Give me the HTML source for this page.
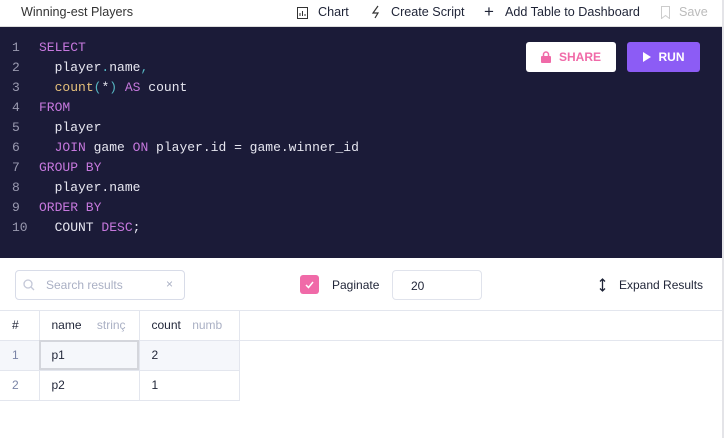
<!DOCTYPE html>
<html><head><style>
*{margin:0;padding:0;box-sizing:border-box}
body{width:724px;height:438px;background:#fff;font-family:"Liberation Sans",sans-serif;position:relative;overflow:hidden;color:#1f2437}
.top{position:absolute;left:0;top:0;width:722px;height:27px;border-bottom:1px solid #ddd;font-size:12.6px}
.top span{position:absolute;top:5px}
.ed{position:absolute;left:0;top:27px;width:722px;height:231px;background:#1b1b38;font-family:"Liberation Mono",monospace;font-size:13px;color:#e6e6f0}
.ln{position:absolute;left:12px;color:#9a9ab0}
.cd{position:absolute;left:39px;white-space:pre}
.k{color:#c678dd}.y{color:#e5c07b}.c{color:#56b6c2}
.btn{position:absolute;top:15px;height:30px;border-radius:3px;font-size:12px;font-weight:bold;font-family:"Liberation Sans",sans-serif;display:flex;align-items:center;justify-content:center;gap:8px}
.rb{position:absolute;right:0;top:0;width:2px;height:438px;background:#e4e4e8}
table{position:absolute;left:0;top:310px;border-collapse:collapse;font-size:12px}
td{border:1px solid #e3e6ee;height:30px;padding-left:12px}
</style></head><body>
<div class="top">
<span style="left:21px;color:#333">Winning-est Players</span>
<svg style="position:absolute;left:297px;top:7px" width="11" height="12"><rect x=".5" y=".5" width="10" height="11" fill="none" stroke="#333"/><path d="M3 9V6M5.5 9V4M8 9V7" stroke="#333"/></svg>
<span style="left:318px">Chart</span>
<svg style="position:absolute;left:370px;top:5px" width="12" height="14"><path d="M8 1L3 8h5l-3 5" fill="none" stroke="#333" stroke-width="1.2"/></svg>
<span style="left:391px">Create Script</span>
<span style="left:484px;top:2px;font-size:17px">+</span>
<span style="left:505px">Add Table to Dashboard</span>
<svg style="position:absolute;left:661px;top:6px" width="9" height="13"><path d="M.5 .5h8v12l-4-3-4 3z" fill="none" stroke="#ccc"/></svg>
<span style="left:679px;color:#bbb">Save</span>
</div>
<div class="ed">
<div class="ln" style="top:13px">1</div><div class="cd k" style="top:13px">SELECT</div>
<div class="ln" style="top:33px">2</div><div class="cd" style="top:33px">  player<span class="c">.</span>name<span class="c">,</span></div>
<div class="ln" style="top:53px">3</div><div class="cd" style="top:53px">  <span class="y">count</span><span class="c">(</span>*<span class="c">)</span> <span class="k">AS</span> count</div>
<div class="ln" style="top:73px">4</div><div class="cd k" style="top:73px">FROM</div>
<div class="ln" style="top:93px">5</div><div class="cd" style="top:93px">  player</div>
<div class="ln" style="top:113px">6</div><div class="cd" style="top:113px">  <span class="k">JOIN</span> game <span class="k">ON</span> player.id = game.winner_id</div>
<div class="ln" style="top:133px">7</div><div class="cd k" style="top:133px">GROUP BY</div>
<div class="ln" style="top:153px">8</div><div class="cd" style="top:153px">  player.name</div>
<div class="ln" style="top:173px">9</div><div class="cd k" style="top:173px">ORDER BY</div>
<div class="ln" style="top:193px">10</div><div class="cd" style="top:193px">  COUNT <span class="k">DESC</span>;</div>
<div class="btn" style="left:526px;width:90px;background:#fff;color:#f06aa8"><svg width="10" height="12"><rect x="0" y="5" width="10" height="7" rx="1" fill="#f06aa8"/><path d="M2.5 5V3.5a2.5 2.5 0 015 0V5" fill="none" stroke="#f06aa8" stroke-width="1.5"/></svg>SHARE</div>
<div class="btn" style="left:627px;width:73px;background:#8c5cf5;color:#fff"><svg width="8" height="10"><path d="M0 0l8 5-8 5z" fill="#fff"/></svg>RUN</div>
</div>
<div style="position:absolute;left:15px;top:270px;width:170px;height:30px;border:1px solid #d8dce8;border-radius:4px;font-size:12px;color:#aab0c4">
<svg style="position:absolute;left:7px;top:8px" width="12" height="12"><circle cx="5" cy="5" r="4" fill="none" stroke="#c4c8d8" stroke-width="1.3"/><path d="M8 8l3 3" stroke="#c4c8d8" stroke-width="1.3"/></svg>
<span style="position:absolute;left:30px;top:7px">Search results</span><span style="position:absolute;left:150px;top:6px">×</span></div>
<div style="position:absolute;left:300px;top:275px;width:19px;height:19px;background:#f06aa8;border-radius:3px"><svg width="19" height="19"><path d="M6 10l2.5 2.5L13 7" fill="none" stroke="#fff" stroke-width="1.5"/></svg></div>
<span style="position:absolute;left:332px;top:278px;font-size:12px">Paginate</span>
<div style="position:absolute;left:392px;top:270px;width:90px;height:30px;border:1px solid #e0e3ec;border-radius:4px;font-size:12px;padding:8px 0 0 18px">20</div>
<svg style="position:absolute;left:599px;top:278px" width="7" height="14"><path d="M3.5 1v12M1 3.5L3.5 1 6 3.5M1 10.5L3.5 13 6 10.5" fill="none" stroke="#1f2437" stroke-width="1.3"/></svg>
<span style="position:absolute;left:619px;top:278px;font-size:12px">Expand Results</span>
<div style="position:absolute;left:0;top:310px;width:722px;height:1px;background:#e3e6ee"></div>
<div style="position:absolute;left:0;top:340px;width:722px;height:1px;background:#e3e6ee"></div>
<table>
<tr><td style="width:39px;border-left:0;border-top:0">#</td><td style="width:100px;border-top:0">name <span style="color:#aab0c4;margin-left:12px">strinç</span></td><td style="width:100px;border-top:0">count <span style="color:#aab0c4;margin-left:8px">numb</span></td></tr>
<tr style="background:#f5f7fb"><td style="border-left:0;color:#7a84a6">1</td><td style="outline:2px solid #d4d6dc;outline-offset:-2px">p1</td><td>2</td></tr>
<tr><td style="border-left:0;color:#7a84a6">2</td><td>p2</td><td>1</td></tr>
</table>
<div class="rb"></div>
</body></html>
